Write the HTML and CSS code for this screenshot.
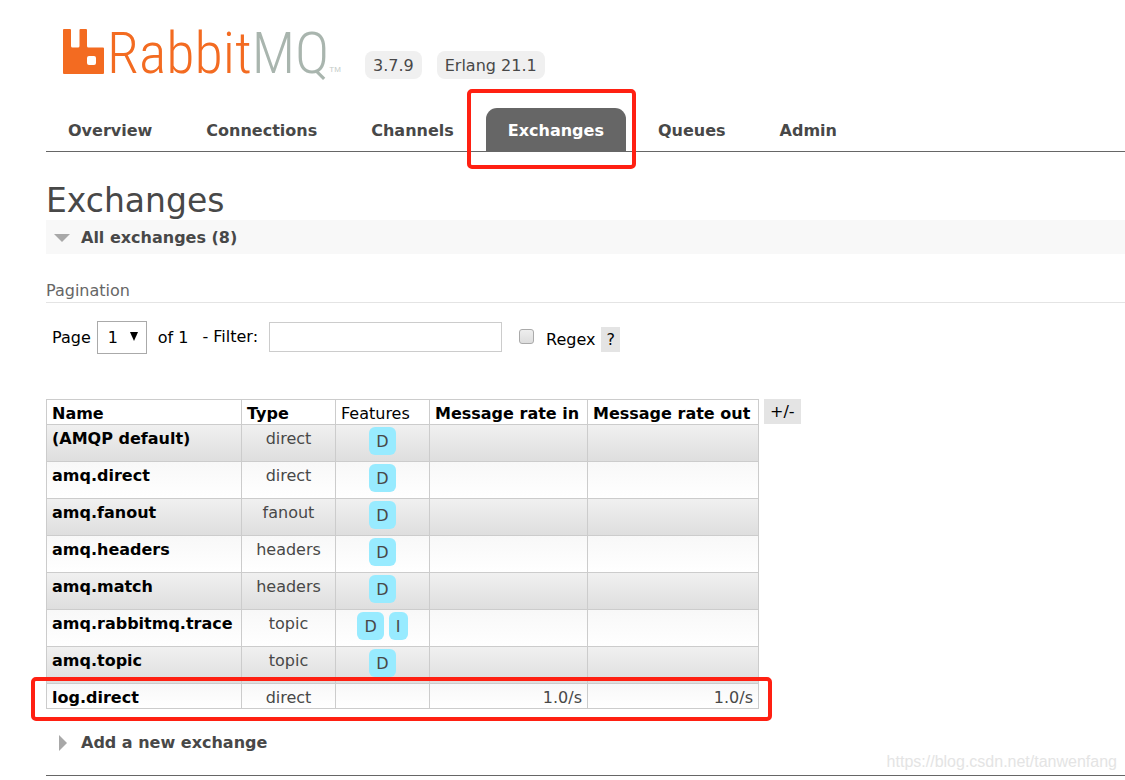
FILE: index.html
```html
<!DOCTYPE html>
<html lang="en">
<head>
<meta charset="utf-8">
<title>RabbitMQ Management</title>
<link rel="stylesheet" href="styles.css">
</head>
<body>
<div class="page">
  <header class="header">
    <a class="logo" href="#">
      <svg class="logo-mark" viewBox="0 0 41 45" aria-hidden="true"><path fill-rule="evenodd" d="M1 0H7Q8 0 8 1V17Q8 18.500 9.500 18.500H15Q16.500 18.500 16.500 17V1Q16.500 0 17.500 0H23Q24 0 24 1V17Q24 18.500 25.500 18.500H40Q41 18.500 41 19.500V44Q41 45 40 45H1Q0 45 0 44V1Q0 0 1 0ZM26 27Q24 27 24 29V34Q24 36 26 36H31Q33 36 33 34V29Q33 27 31 27Z"/></svg>
      <span class="logo-text">Rabbit<span class="logo-mq">MQ</span></span><span class="logo-tm">TM</span>
    </a>
    <span class="version">3.7.9</span>
    <span class="version">Erlang 21.1</span>
  </header>
  <nav>
    <ul class="tabs">
      <li><a href="#">Overview</a></li>
      <li><a href="#">Connections</a></li>
      <li><a href="#">Channels</a></li>
      <li class="marked"><a class="selected" href="#">Exchanges</a><span class="mark mark-tab"></span></li>
      <li><a href="#">Queues</a></li>
      <li><a href="#">Admin</a></li>
    </ul>
  </nav>
  <main>
    <h1>Exchanges</h1>
    <h2 class="section open"><svg class="arrow" viewBox="0 0 16 16" aria-hidden="true"><path d="M0 4H16L8 12Z"/></svg>All exchanges (8)</h2>
    <h3>Pagination</h3>
    <form class="filters">
      <div class="pager">
        <label for="page">Page</label>
        <span class="select">
          <select id="page"><option>1</option></select>
          <svg class="caret" viewBox="0 0 8 9" aria-hidden="true"><path d="M0 0H8L4 9Z"/></svg>
        </span>
        <span class="total">of 1</span>
      </div>
      <div class="filter">
        <label for="filter">- Filter:</label>
        <input id="filter" class="text" type="text">
      </div>
      <div class="regex">
        <input id="regex" class="check" type="checkbox">
        <label for="regex">Regex</label>
        <button class="small-button" type="button">?</button>
      </div>
    </form>
    <div class="list">
      <div class="marked">
        <table>
          <colgroup><col class="c-name"><col class="c-type"><col class="c-type"><col class="c-in"><col class="c-out"></colgroup>
          <thead><tr><th>Name</th><th>Type</th><th class="plain">Features</th><th>Message rate in</th><th>Message rate out</th></tr></thead>
          <tbody>
            <tr><td><a href="#">(AMQP default)</a></td><td>direct</td><td><span class="tag">D</span></td><td></td><td></td></tr>
            <tr><td><a href="#">amq.direct</a></td><td>direct</td><td><span class="tag">D</span></td><td></td><td></td></tr>
            <tr><td><a href="#">amq.fanout</a></td><td>fanout</td><td><span class="tag">D</span></td><td></td><td></td></tr>
            <tr><td><a href="#">amq.headers</a></td><td>headers</td><td><span class="tag">D</span></td><td></td><td></td></tr>
            <tr><td><a href="#">amq.match</a></td><td>headers</td><td><span class="tag">D</span></td><td></td><td></td></tr>
            <tr><td><a href="#">amq.rabbitmq.trace</a></td><td>topic</td><td><span class="tag">D</span> <span class="tag">I</span></td><td></td><td></td></tr>
            <tr><td><a href="#">amq.topic</a></td><td>topic</td><td><span class="tag">D</span></td><td></td><td></td></tr>
            <tr><td><a href="#">log.direct</a></td><td>direct</td><td></td><td>1.0/s</td><td>1.0/s</td></tr>
          </tbody>
        </table>
        <span class="mark mark-row"></span>
      </div>
      <button class="small-button" type="button">+/-</button>
    </div>
    <h2 class="section"><svg class="arrow" viewBox="0 0 16 16" aria-hidden="true"><path d="M5 0V16L13 8Z"/></svg>Add a new exchange</h2>
  </main>
  <footer></footer>
</div>
<span class="watermark">https://blog.csdn.net/tanwenfang</span>
</body>
</html>
```
FILE: styles.css
```css
* { box-sizing: border-box; }
body {
  margin: 0;
  background: #fff;
  color: #484848;
  font: 16px/20px Verdana, "DejaVu Sans", sans-serif;
}
a { color: inherit; text-decoration: none; }
button, input, select { font: inherit; color: #000; }
.page { padding: 24px 0 0 46px; }

.header { display: flex; align-items: flex-end; gap: 15px; height: 55px; }
.logo { display: flex; align-items: flex-end; width: 287px; height: 55px; margin-left: 17px; }
.logo-mark { flex: none; width: 41px; height: 45px; fill: #f36b21; margin: 0 3px 5px 0; }
.logo-text {
  font-family: "Roboto Condensed", Roboto, sans-serif;
  font-size: 58px;
  font-weight: 300;
  line-height: 52px;
  color: #f36b21;
}
.logo-mq { color: #a9b5ae; }
.logo-tm { font: 8px/10px "Liberation Sans", sans-serif; color: #c4cbc7; margin-bottom: 4px; }
.version { padding: 5px 8px 3px; border-radius: 8px; background: #f0f0f0; }

.tabs {
  display: flex;
  gap: 10px;
  margin: 29px 0 0;
  padding: 0;
  list-style: none;
  border-bottom: 1px solid #666;
  font-weight: bold;
}
.tabs a { display: block; padding: 13px 22px 10px; border-radius: 11px 11px 0 0; }
.tabs .selected { background: #666; color: #fff; }
.marked { position: relative; }
.mark { position: absolute; border: 4px solid #ff2012; border-radius: 5px; pointer-events: none; }
.mark-tab { inset: -19px -10px -18px -19px; }
.mark-row { left: -15px; right: -13px; bottom: -12px; height: 44px; }

h1 { margin: 30px 0 0; font-size: 33px; line-height: 38px; font-weight: normal; }
.section {
  display: flex;
  align-items: center;
  gap: 11px;
  margin: 0;
  padding: 8px 8px 6px;
  font-size: 16px;
}
.open { background: #f8f8f8; }
.arrow { width: 16px; height: 16px; fill: #a8a8a8; }
h3 {
  margin: 27px 0 0;
  padding-bottom: 1px;
  border-bottom: 1px solid #e4e4e4;
  font-size: 16px;
  font-weight: normal;
  color: #666;
}

.filters { display: flex; align-items: center; margin-top: 18px; color: #000; padding-left: 6px; }
.pager, .filter, .regex { display: flex; align-items: center; }
.select { position: relative; margin: 0 11px 0 6px; }
.select select {
  display: block;
  width: 50px;
  height: 33px;
  padding: 0 10px;
  appearance: none;
  background: #fff;
  border: 1px solid #aaa;
  border-radius: 0;
}
.caret { position: absolute; right: 9px; top: 11px; width: 8px; height: 9px; pointer-events: none; }
.total { margin-right: 14px; }
.filter { align-self: flex-start; padding-top: 1px; }
.text { width: 233px; height: 30px; margin: 0 17px 0 11px; border: 1px solid #ccc; }
.check {
  appearance: none;
  width: 15px;
  height: 15px;
  margin: 0 12px 6px 0;
  border: 1px solid #aaa;
  border-radius: 3px;
  background: linear-gradient(#eee, #ddd);
}
.regex { align-self: flex-end; padding-bottom: 2px; }
.small-button { padding: 3px 6px 2px; border: 0; background: #e4e4e4; line-height: 20px; }
.regex .small-button { margin-left: 6px; padding: 3px 5px 2px; }

.list { display: flex; align-items: flex-start; gap: 5px; margin-top: 45px; }
table { table-layout: fixed; width: 713px; border-collapse: collapse; }
.c-name { width: 195px; }
.c-type { width: 94px; }
.c-in { width: 158px; }
.c-out { width: 171px; }
th, td { padding: 4px 5px 0; border: 1px solid #ccc; vertical-align: top; white-space: nowrap; }
th { text-align: left; color: #000; }
.plain { font-weight: normal; }
td { text-align: center; }
td:first-child { text-align: left; font-weight: bold; color: #000; }
td:nth-child(n+4) { text-align: right; }
tbody tr { height: 37px; background: linear-gradient(#f8f8f8, #fff); }
tbody tr:nth-child(odd) { background: linear-gradient(#f0f0f0, #dedede); }
tbody tr:last-child { height: 25px; background: linear-gradient(#f8f8f8, #fff); }
.tag { display: inline-block; padding: 5px 7px 3px; border-radius: 6px; background: #98ebff; }
td:nth-child(3) { padding-top: 2px; padding-bottom: 0; }
main > .section:last-child { margin-top: 16px; }
footer { margin-top: 16px; border-top: 1px solid #666; }
.watermark {
  position: absolute;
  right: 8px;
  bottom: 8px;
  font: 16px/20px "Liberation Sans", sans-serif;
  color: #e4e4e4;
}
```
